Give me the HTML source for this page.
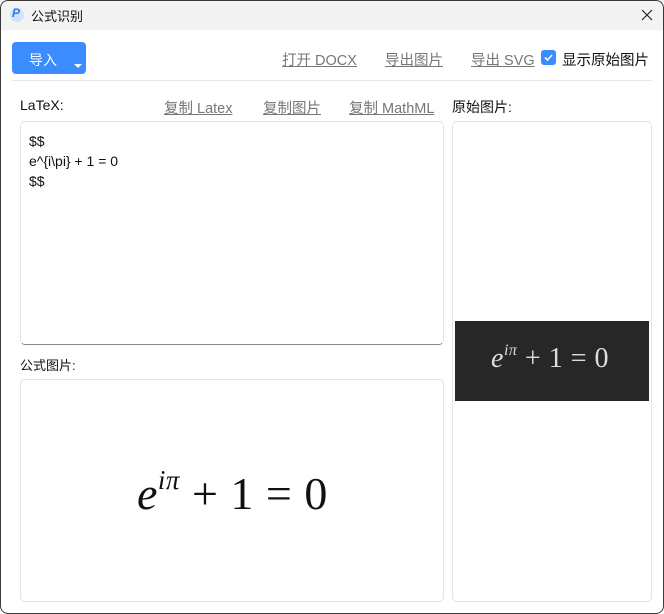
<!DOCTYPE html>
<html><head><meta charset="utf-8"><style>
*{margin:0;padding:0;box-sizing:border-box}
body{width:664px;height:614px;background:#fff;font-family:"Liberation Sans","Noto Sans CJK SC",sans-serif;position:relative;overflow:hidden}
.win{position:absolute;left:0;top:0;width:664px;height:614px;overflow:hidden;background:#fff}
.frame{position:absolute;left:0;top:0;width:664px;height:614px;border:1px solid #3a3a3a;border-radius:8px;pointer-events:none}
.title{position:absolute;left:0;top:0;width:664px;height:30px;background:#f3f3f3}
.abs{position:absolute}
.lnk{position:absolute;color:#777;text-decoration:underline;font-size:14.5px;white-space:nowrap}
.lbl{position:absolute;color:#111;font-size:14px;white-space:nowrap}
.box{position:absolute;border:1px solid #e4e4e4;border-radius:5px;background:#fff}
.m{font-family:"Liberation Serif","DejaVu Serif",serif;white-space:nowrap;position:absolute}
</style></head><body><div class="win">
<div class="title">
<div class="abs" style="left:10px;top:8px;width:14px;height:14px;border-radius:50%;background:#cfe3ff"></div>
<div class="abs" style="left:12px;top:6px;font-size:12px;font-weight:bold;color:#2f7bf0;font-style:italic">P</div>
<div class="abs" style="left:31px;top:6px;font-size:13px;color:#111">公式识别</div>
<svg class="abs" style="left:641px;top:9px" width="12" height="12"><path d="M1 1L11 11M11 1L1 11" stroke="#222" stroke-width="1.2"/></svg>
</div>
<div class="abs" style="left:12px;top:42px;width:74px;height:32px;background:#3a8cff;border-radius:4px"></div>
<div class="abs" style="left:29px;top:50px;color:#fff;font-size:14px">导入</div>
<div class="abs" style="left:74px;top:64px;width:0;height:0;border-left:4px solid transparent;border-right:4px solid transparent;border-top:4px solid #fff"></div>
<div class="lnk" style="left:282px;top:49px">打开 DOCX</div>
<div class="lnk" style="left:385px;top:49px">导出图片</div>
<div class="lnk" style="left:471px;top:49px">导出 SVG</div>
<div class="abs" style="left:541px;top:50px;width:15px;height:15px;background:#3a8cff;border-radius:3px"></div>
<svg class="abs" style="left:541px;top:50px" width="15" height="15"><path d="M4 7.5L6.5 10L11 5" stroke="#fff" stroke-width="1.6" fill="none"/></svg>
<div class="lbl" style="left:562px;top:49px;font-size:14.5px">显示原始图片</div>
<div class="abs" style="left:12px;top:80px;width:640px;height:1px;background:#e6e6e6"></div>
<div class="lbl" style="left:20px;top:97px">LaTeX:</div>
<div class="lnk" style="left:164px;top:97px">复制 Latex</div>
<div class="lnk" style="left:263px;top:97px">复制图片</div>
<div class="lnk" style="left:349px;top:97px">复制 MathML</div>
<div class="lbl" style="left:452px;top:97px">原始图片:</div>
<div class="box" style="left:20px;top:121px;width:424px;height:224px;border-bottom:1px solid #888"></div>
<div class="lbl" style="left:29px;top:131px;line-height:20px">$$<br>e^{i\pi} + 1 = 0<br>$$</div>
<div class="lbl" style="left:20px;top:355px;font-size:13px">公式图片:</div>
<div class="box" style="left:20px;top:379px;width:424px;height:223px"></div>
<div class="box" style="left:452px;top:121px;width:200px;height:481px"></div>
<div class="abs" style="left:455px;top:321px;width:194px;height:80px;background:#272727"></div>
<div class="m" style="left:491px;top:343px;font-size:28px;color:#ddd;letter-spacing:0.5px"><i>e</i><sup style="font-size:16px;position:relative;top:-2px"><i>iπ</i></sup> + 1 = 0</div>
<div class="m" style="left:137px;top:467px;font-size:46px;color:#111;letter-spacing:0.5px"><i>e</i><sup style="font-size:27px;position:relative;top:-4px"><i>iπ</i></sup> + 1 = 0</div>
</div><div class="frame"></div></body></html>
